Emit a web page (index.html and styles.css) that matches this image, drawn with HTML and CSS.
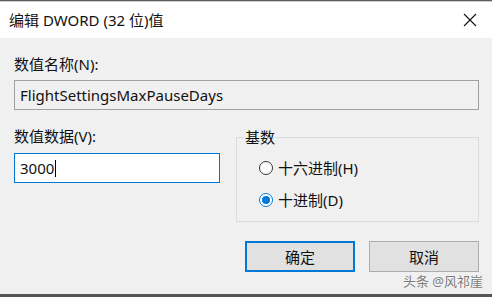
FILE: index.html
```html
<!DOCTYPE html>
<html lang="zh-CN">
  <head>
    <meta charset="UTF-8" />
    <meta name="viewport" content="width=device-width, initial-scale=1.0" />
    <title>编辑 DWORD (32 位)值</title>
    <link rel="stylesheet" href="styles.css">
  </head>
  <body>
    <div class="edge-top"></div>
    <div class="titlebar">
      <span class="title">编辑 DWORD (32 位)值</span>
      <svg class="close" width="14" height="14" viewBox="0 0 14 14">
        <path d="M1 1 L13 13 M13 1 L1 13" stroke="#111" stroke-width="1.1" fill="none" />
      </svg>
    </div>
    <div class="dialog">
      <label class="label">数值名称(N):</label>
      <div class="field readonly">FlightSettingsMaxPauseDays</div>
      <div class="row">
        <div class="col">
          <label class="label">数值数据(V):</label>
          <div class="field focused">3000<span class="caret"></span></div>
        </div>
        <fieldset class="group">
          <legend>基数</legend>
          <div class="radio"><span class="dot"></span>十六进制(H)</div>
          <div class="radio"><span class="dot checked"></span>十进制(D)</div>
        </fieldset>
      </div>
      <div class="buttons">
        <button class="btn primary">确定</button>
        <button class="btn">取消</button>
      </div>
      <div class="mark">头条 @风祁崖</div>
    </div>
    <div class="edge-bottom"></div>
  </body>
</html>
```

FILE: styles.css
```css
* {
  padding: 0;
  margin: 0;
  box-sizing: border-box;
  font-family: "Noto Sans", "Noto Sans CJK SC", sans-serif;
}
body {
  width: 492px;
  height: 297px;
  overflow: hidden;
  background-color: #f0f0f0;
  color: #111;
  font-size: 15px;
  display: flex;
  flex-direction: column;
}
.edge-top {
  height: 2px;
  background: linear-gradient(#5c5c5c 50%, #cfcfcf 50%);
}
.titlebar {
  height: 36px;
  background-color: #fff;
  display: flex;
  align-items: center;
  justify-content: space-between;
  padding: 0 15px 0 9px;
}
.title {
  font-size: 15px;
  line-height: 20px;
}
.dialog {
  flex: 1;
  padding: 16px 13px 0 14px;
  display: flex;
  flex-direction: column;
}
.label {
  display: block;
  line-height: 20px;
  height: 20px;
}
.field {
  height: 30px;
  border: 1px solid #a0a0a0;
  padding: 0 5px;
  line-height: 28px;
  display: flex;
  align-items: center;
}
.dialog > .field {
  margin-top: 6px;
}
.readonly {
  background-color: #f0f0f0;
}
.focused {
  background-color: #fff;
  border-color: #0078d7;
  width: 206px;
  margin-top: 7px;
}
.caret {
  width: 1px;
  height: 17px;
  background-color: #000;
  margin-left: 1px;
}
.row {
  display: flex;
  gap: 16px;
  margin-top: 16px;
}
.group {
  flex: 1;
  height: 95px;
  margin-top: 1px;
  border: 1px solid #dcdcdc;
  padding: 0;
}
.group legend {
  margin-left: 7px;
  padding: 0 1px;
  line-height: 20px;
}
.radio {
  display: flex;
  align-items: center;
  height: 20px;
  line-height: 20px;
  margin: 11px 0 0 22px;
}
.radio + .radio {
  margin-top: 12px;
}
.dot {
  width: 14px;
  height: 14px;
  border: 1px solid #333;
  border-radius: 50%;
  background-color: #fff;
  margin-right: 5px;
  display: flex;
  align-items: center;
  justify-content: center;
}
.dot.checked {
  border-color: #0078d7;
}
.dot.checked::after {
  content: "";
  width: 8px;
  height: 8px;
  border-radius: 50%;
  background-color: #0078d7;
}
.buttons {
  display: flex;
  justify-content: flex-end;
  gap: 14px;
  margin-top: 19px;
}
.btn {
  width: 110px;
  height: 31px;
  background-color: #e1e1e1;
  border: 1px solid #adadad;
  font-size: 15px;
  color: #111;
}
.primary {
  border: 2px solid #0078d7;
}
.mark {
  align-self: flex-end;
  margin-top: 1px;
  margin-right: -4px;
  font-size: 13px;
  line-height: 16px;
  color: #7a7a7a;
  text-shadow: 0 0 2px #fff;
}
.edge-bottom {
  height: 3px;
  background-color: #555;
}
```
